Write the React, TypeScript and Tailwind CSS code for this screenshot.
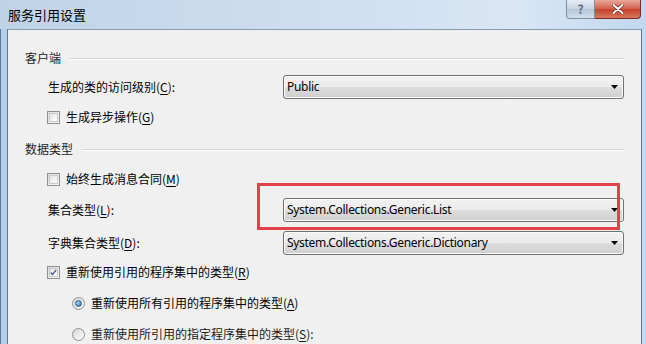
import React from 'react';

const cjk = { fontFamily: '"Noto Sans CJK SC", "Noto Sans", sans-serif' };

function Key({ k }: { k: string }) {
  return <span className="underline underline-offset-2">{k}</span>;
}

function Combo({ value }: { value: string }) {
  return (
    <div className="ml-auto mr-[17px] flex h-[24px] w-[341px] items-center rounded-[3px] border border-[#707070] bg-[linear-gradient(to_bottom,#f2f2f2_0%,#ebebeb_50%,#dddddd_51%,#cfcfcf_100%)] pl-[3px] pr-[5px] shadow-[inset_0_0_0_1px_#fbfbfb]">
      <span className="flex-1 text-[12px] tracking-[-0.3px] text-black" style={{ fontFamily: '"Noto Sans", sans-serif' }}>
        {value}
      </span>
      <svg width="7" height="4" viewBox="0 0 7 4">
        <path d="M0 0h7L3.5 4z" fill="#000" />
      </svg>
    </div>
  );
}

function CheckBox({ checked }: { checked?: boolean }) {
  return (
    <div className="flex h-[13px] w-[13px] items-center justify-center border border-[#8e8f8f] bg-[linear-gradient(135deg,#dcdcdc,#fbfbfb)] p-[1px]">
      <div className="flex h-full w-full items-center justify-center border border-[#c8c8c8] bg-[linear-gradient(135deg,#e4e4e4,#ffffff)]">
        {checked && (
          <svg width="9" height="9" viewBox="0 0 9 9">
            <path d="M1 4.5l2.3 2.6L8 1" fill="none" stroke="#3c4f8a" strokeWidth="1.6" />
          </svg>
        )}
      </div>
    </div>
  );
}

function Radio({ checked }: { checked?: boolean }) {
  return (
    <div className="flex h-[13px] w-[13px] items-center justify-center rounded-full border border-[#8e8f8f] bg-[linear-gradient(135deg,#d8d8d8,#fbfbfb)]">
      {checked && (
        <div className="h-[7px] w-[7px] rounded-full border border-[#2c628b] bg-[radial-gradient(circle_at_35%_35%,#9ad0f4,#2a6fa8)]" />
      )}
    </div>
  );
}

function GroupHeader({ title, mt }: { title: string; mt: string }) {
  return (
    <div className={`flex h-[16px] items-center pl-[17px] pr-[17px] ${mt}`}>
      <span className="text-[12px] text-[#1e1e1e]">{title}</span>
      <div className="ml-[9px] h-px flex-1 bg-[#d0d5d9] shadow-[0_1px_0_#ffffff]" />
    </div>
  );
}

export default function App() {
  return (
    <div className="relative h-[344px] w-[646px] overflow-hidden bg-[linear-gradient(to_right,#bfd3e8,#ccdcee_40%,#d8e6f5_80%,#c2d8ee)]" style={cjk}>
      {/* title bar */}
      <div className="relative flex h-[29px] items-center pl-[8px]">
        <span className="text-[13px] text-black">服务引用设置</span>
        <div className="absolute right-[5px] top-0 flex h-[19px]">
          <div className="flex w-[29px] items-center justify-center rounded-bl-[4px] border border-t-0 border-[#7d8ea3] bg-[linear-gradient(to_bottom,#e4ecf5,#c7d4e2_50%,#b6c6d8_51%,#d2dfec)] text-[12px] font-bold text-[#5a6b82]">
            ?
          </div>
          <div className="flex w-[46px] items-center justify-center rounded-br-[4px] border border-l-0 border-t-0 border-[#7a2a22] bg-[linear-gradient(to_bottom,#e9a99a,#d45e4a_50%,#c7402a_51%,#d77a5e)]">
            <svg width="12" height="10" viewBox="0 0 12 10">
              <path d="M1.5 1l9 8M10.5 1l-9 8" stroke="#5a1e16" strokeWidth="3.2" strokeLinecap="round" />
              <path d="M1.5 1l9 8M10.5 1l-9 8" stroke="#fff" strokeWidth="2" strokeLinecap="round" />
            </svg>
          </div>
        </div>
      </div>

      {/* frame + content */}
      <div className="flex h-[315px]">
        <div className="w-[8px] border-l border-r border-l-[#5c7895] border-r-[#5f7790] bg-[#b4cfea]" />
        <div className="relative flex flex-1 flex-col border-t border-[#8a9bb0] bg-[#f0f0f0] text-[12px] text-black">
          <GroupHeader title="客户端" mt="mt-[20px]" />

          <div className="mt-[9px] flex h-[24px] items-center pl-[40px]">
            <span>
              生成的类的访问级别(<Key k="C" />):
            </span>
            <Combo value="Public" />
          </div>

          <div className="mt-[10px] flex h-[16px] items-center gap-[6px] pl-[39px]">
            <CheckBox />
            <span>
              生成异步操作(<Key k="G" />)
            </span>
          </div>

          <GroupHeader title="数据类型" mt="mt-[16px]" />

          <div className="mt-[14px] flex h-[16px] items-center gap-[6px] pl-[39px]">
            <CheckBox />
            <span>
              始终生成消息合同(<Key k="M" />)
            </span>
          </div>

          <div className="mt-[11px] flex h-[24px] items-center pl-[40px]">
            <span>
              集合类型(<Key k="L" />):
            </span>
            <Combo value="System.Collections.Generic.List" />
          </div>

          <div className="mt-[9px] flex h-[24px] items-center pl-[40px]">
            <span>
              字典集合类型(<Key k="D" />):
            </span>
            <Combo value="System.Collections.Generic.Dictionary" />
          </div>

          <div className="mt-[9px] flex h-[16px] items-center gap-[6px] pl-[39px]">
            <CheckBox checked />
            <span>
              重新使用引用的程序集中的类型(<Key k="R" />)
            </span>
          </div>

          <div className="mt-[15px] flex h-[16px] items-center gap-[6px] pl-[64px]">
            <Radio checked />
            <span>
              重新使用所有引用的程序集中的类型(<Key k="A" />)
            </span>
          </div>

          <div className="mt-[15px] flex h-[16px] items-center gap-[6px] pl-[64px]">
            <Radio />
            <span className="text-[#1a1a1a]">
              重新使用所引用的指定程序集中的类型(<Key k="S" />):
            </span>
          </div>

          {/* red annotation box */}
          <div className="pointer-events-none absolute left-[249px] top-[153px] h-[47px] w-[363px] border-[3px] border-[#e2414a]" />
        </div>
        <div className="w-[5px] border-l border-[#5f7790] bg-[#c4daf0]" />
      </div>
    </div>
  );
}
